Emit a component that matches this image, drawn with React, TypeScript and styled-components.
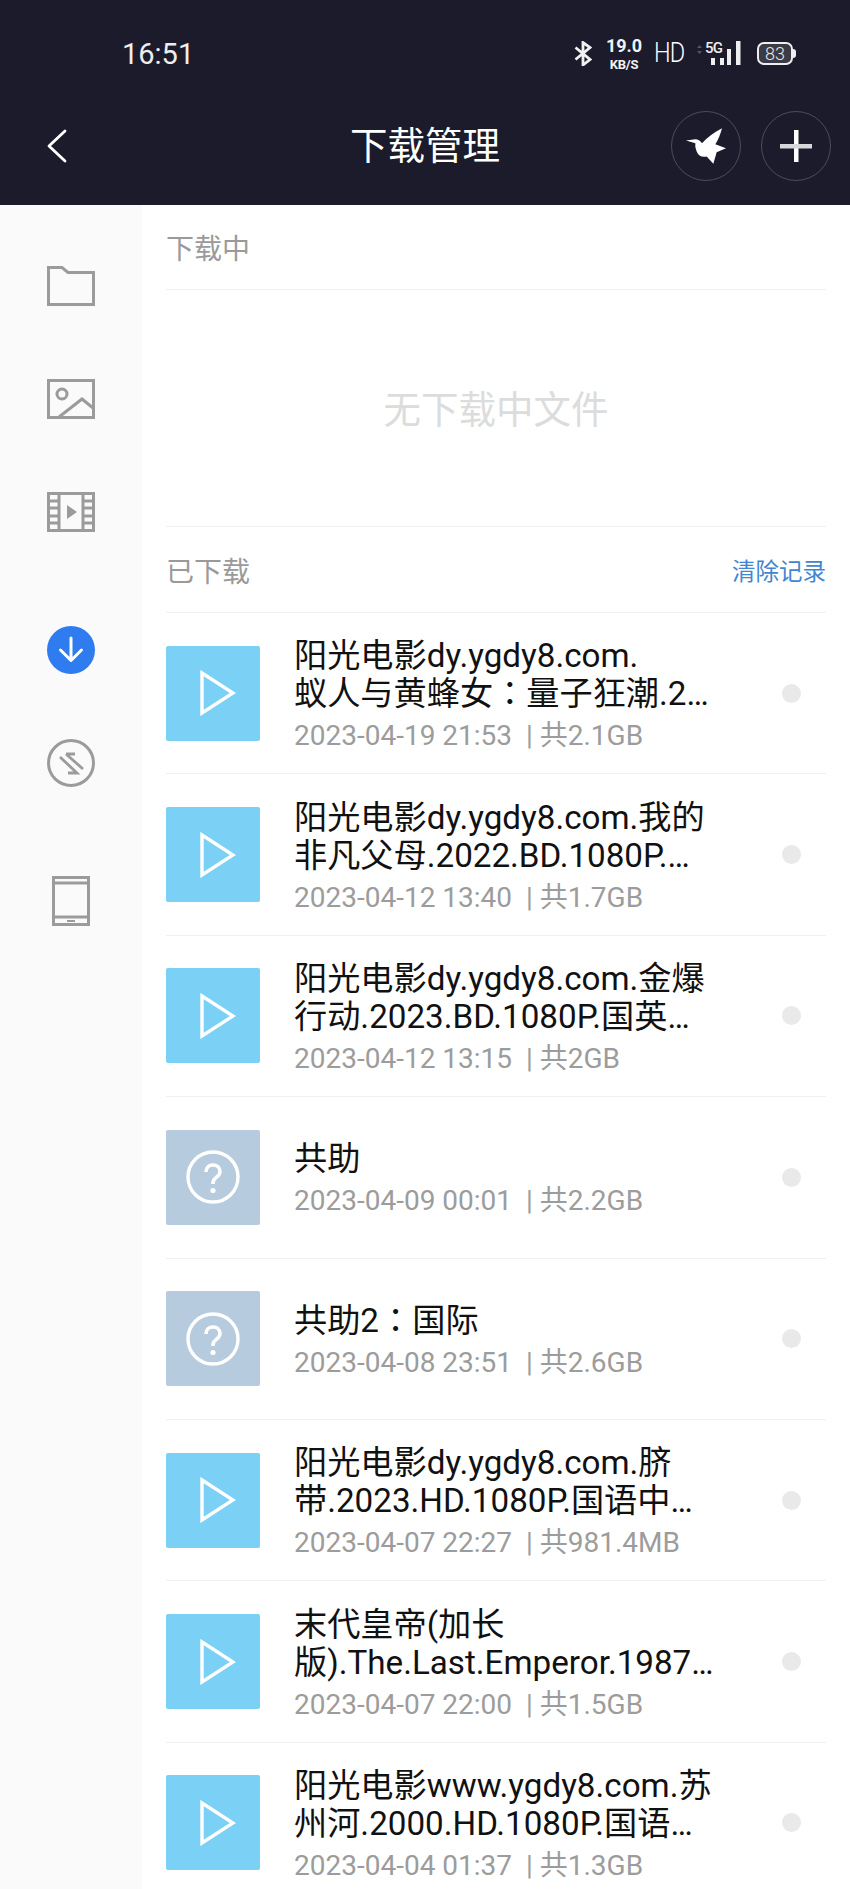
import React from "react";
import styled, { createGlobalStyle } from "styled-components";

const Global = createGlobalStyle`
  html, body { margin: 0; padding: 0; background: #fff; }
  body { font-family: Roboto, "Noto Sans CJK SC", sans-serif; }
`;

const Page = styled.div`
  width: 850px;
  height: 1889px;
  overflow: hidden;
  display: flex;
  flex-direction: column;
`;
const Header = styled.header`
  flex: none;
  height: 205px;
  background: #1b1b2b;
  color: #fff;
  display: flex;
  flex-direction: column;
`;
const StatusBar = styled.div`
  height: 106px;
  padding: 38px 55px 0 122px;
  box-sizing: border-box;
  display: flex;
  align-items: flex-start;
  justify-content: space-between;
`;
const Time = styled.span`
  font-size: 29px;
  line-height: 32px;
  color: #eee;
`;
const StatusIcons = styled.div`
  display: flex;
  align-items: center;
  height: 30px;
`;
const Speed = styled.div`
  margin-left: 13px;
  margin-top: 2px;
  width: 38px;
  display: flex;
  flex-direction: column;
  align-items: center;
  font-weight: 700;
  color: #f2f2f2;
`;
const SpeedValue = styled.span`
  font-size: 18px;
  line-height: 22px;
`;
const SpeedUnit = styled.span`
  font-size: 13px;
  line-height: 16px;
  letter-spacing: -0.2px;
`;
const Hd = styled.span`
  margin-left: 11px;
  font-size: 28px;
  line-height: 30px;
  letter-spacing: -1px;
  font-weight: 300;
  transform: scaleX(0.84);
  transform-origin: left center;
  width: 30px;
`;
const Battery = styled.div`
  margin-left: 15px;
  margin-right: 2px;
  position: relative;
  width: 36px;
  height: 23px;
  box-sizing: border-box;
  border: 2px solid #eee;
  border-radius: 7px;
  background: #3a3b47;
  background-clip: padding-box;
  display: flex;
  align-items: center;
  justify-content: center;
  font-size: 18px;
  font-weight: 300;
  color: #e8e8e8;
  &::after {
    content: "";
    position: absolute;
    right: -5px;
    top: 5px;
    width: 3px;
    height: 9px;
    background: #eee;
    border-radius: 0 3px 3px 0;
  }
`;
const Toolbar = styled.div`
  position: relative;
  height: 80px;
  padding: 0 19px 0 47px;
  display: flex;
  align-items: center;
`;
const Title = styled.h1`
  position: absolute;
  left: 0;
  right: 0;
  margin: 0;
  text-align: center;
  font-size: 37.5px;
  font-weight: 400;
  line-height: 80px;
  color: #fff;
`;
const ToolActions = styled.div`
  margin-left: auto;
  display: flex;
  gap: 20px;
`;
const RoundButton = styled.div`
  width: 70px;
  height: 70px;
  box-sizing: border-box;
  border: 1.5px solid #4c4d59;
  border-radius: 50%;
  display: flex;
  align-items: center;
  justify-content: center;
`;
const Body = styled.div`
  flex: 1;
  min-height: 0;
  display: flex;
`;
const Sidebar = styled.nav`
  flex: none;
  width: 142px;
  background: #fafafa;
  padding-top: 24px;
  display: flex;
  flex-direction: column;
`;
const SideItem = styled.div<{ $gap?: number }>`
  height: 113px;
  margin-top: ${(p) => p.$gap ?? 0}px;
  display: flex;
  align-items: center;
  justify-content: center;
`;
const Main = styled.main`
  flex: 1;
  min-width: 0;
  padding: 0 24px 0 24px;
  background: #fff;
`;
const SectionHead = styled.div<{ $h: number }>`
  height: ${(p) => p.$h}px;
  display: flex;
  align-items: center;
  justify-content: space-between;
  box-sizing: border-box;
  border-bottom: 1px solid #f0f0f0;
`;
const SectionLabel = styled.span`
  font-size: 28px;
  color: #9a9a9a;
`;
const ClearLink = styled.span`
  font-size: 23.5px;
  color: #3f87d0;
`;
const Empty = styled.div`
  height: 237px;
  box-sizing: border-box;
  padding-bottom: 4px;
  border-bottom: 1px solid #f0f0f0;
  display: flex;
  align-items: center;
  justify-content: center;
  font-size: 37.5px;
  color: #dcdcdc;
`;
const Row = styled.div`
  height: 161.4px;
  box-sizing: border-box;
  border-bottom: 1px solid #f0f0f0;
  display: flex;
  align-items: center;
`;
const Thumb = styled.div<{ $kind: "video" | "unknown" }>`
  flex: none;
  width: 94px;
  height: 95px;
  border-radius: 2px;
  background: ${(p) => (p.$kind === "video" ? "#7bd0f5" : "#b7cbdf")};
  display: flex;
  align-items: center;
  justify-content: center;
`;
const PlayWrap = styled.span`
  display: flex;
  margin-left: 10px;
`;
const Info = styled.div`
  flex: 1;
  min-width: 0;
  margin-left: 34px;
  padding-top: 5px;
`;
const NameLine = styled.div`
  font-size: 33.2px;
  line-height: 38px;
  color: #111;
  white-space: nowrap;
`;
const Colon = styled.span`
  font-family: Roboto, "Noto Sans CJK TC", sans-serif;
`;
const Meta = styled.div`
  margin-top: 5px;
  font-size: 28px;
  line-height: 36px;
  color: #9c9c9c;
  white-space: pre;
`;
const Dot = styled.span`
  flex: none;
  width: 19px;
  height: 19px;
  margin-right: 25px;
  border-radius: 50%;
  background: #e9e9e9;
`;

const ICON = "#9b9b9b";

const FolderIcon = () => (
  <svg width="48" height="40" viewBox="0 0 48 40" fill="none" stroke={ICON} strokeWidth="3">
    <path d="M1.5 1.5H15L21 6.5H46.5V38.5H1.5Z" />
  </svg>
);
const ImageIcon = () => (
  <svg width="48" height="40" viewBox="0 0 48 40" fill="none" stroke={ICON} strokeWidth="3">
    <rect x="1.5" y="1.5" width="45" height="37" />
    <circle cx="15" cy="15" r="5" />
    <path d="M12 38L35 20L46 29" />
  </svg>
);
const FilmIcon = () => (
  <svg width="48" height="40" viewBox="0 0 48 40" fill="none" stroke={ICON} strokeWidth="3">
    <rect x="1.5" y="1.5" width="45" height="37" />
    <path d="M12 2V38M36 2V38M2 9H11M2 16H11M2 24H11M2 31H11M37 9H46M37 16H46M37 24H46M37 31H46" />
    <path d="M20 13L30 20L20 27Z" fill={ICON} stroke="none" />
  </svg>
);
const DownloadIcon = () => (
  <svg width="48" height="48" viewBox="0 0 48 48" fill="none">
    <circle cx="24" cy="24" r="24" fill="#2f7bf0" />
    <path d="M24 12V34M13.5 24L24 34.5L34.5 24" stroke="#fff" strokeWidth="3" strokeLinecap="round" strokeLinejoin="round" />
  </svg>
);
const TransferIcon = () => (
  <svg width="48" height="48" viewBox="0 0 48 48" fill="none" stroke={ICON}>
    <circle cx="24" cy="24" r="22.5" strokeWidth="3" />
    <path d="M13 18L30 34H21M19 15H28M19 15L36 30" strokeWidth="2.8" />
  </svg>
);
const TabletIcon = () => (
  <svg width="38" height="50" viewBox="0 0 38 50" fill="none" stroke={ICON} strokeWidth="3">
    <rect x="1.5" y="1.5" width="35" height="47" />
    <path d="M2 7H36M2 41H36" />
    <path d="M15 45H23" strokeWidth="2" />
  </svg>
);
const PlayIcon = () => (
  <PlayWrap>
    <svg width="36" height="46" viewBox="0 0 36 46" fill="none" stroke="#fff" strokeWidth="3.4">
      <path d="M2 3L33 23L2 43Z" />
    </svg>
  </PlayWrap>
);
const QuestionIcon = () => (
  <svg width="56" height="56" viewBox="0 0 56 56" fill="none" stroke="#fff">
    <circle cx="28" cy="28" r="25" strokeWidth="3.4" />
    <path d="M21 23C21 18.5 24 16 28 16C32 16 35 18.5 35 22.5C35 28 29 28 28 33V35" strokeWidth="3.6" />
    <circle cx="28" cy="41.5" r="2.6" fill="#fff" stroke="none" />
  </svg>
);
const BirdIcon = () => (
  <svg width="40" height="36" viewBox="0 0 120 107" fill="#fff">
    <path d="M0 37L28 33Q40 33 48 45Q70 20 108 0Q100 30 88 48L120 60L92 72L82 107L62 85Q40 90 32 70Q26 55 28 45Z" />
  </svg>
);
const PlusIcon = () => (
  <svg width="34" height="34" viewBox="0 0 34 34">
    <rect x="15" y="1" width="4.5" height="32" fill="#fff" />
    <rect x="1" y="15" width="32" height="4.5" fill="#d8d8dc" />
  </svg>
);
const BluetoothIcon = () => (
  <svg width="18" height="25" viewBox="0 0 18 25" fill="none" stroke="#f0f0f0" strokeWidth="2.8" style={{ flex: "none" }}>
    <path d="M1.5 6.5L16 18.5L9 24V1.5L16 6.5L1.5 18.5" />
  </svg>
);
const SignalIcon = () => (
  <svg width="46" height="26" viewBox="0 0 46 26" style={{ flex: "none", marginLeft: 12 }}>
    <path d="M1 8L3.5 5L6 8ZM1 11L3.5 14L6 11Z" fill="#55565f" />
    <text x="9" y="13" fontSize="15" fontFamily="Roboto, sans-serif" fontWeight="500" fill="#eee" textLength="18">5G</text>
    <rect x="15" y="18" width="4" height="7" fill="#eee" />
    <rect x="24" y="18" width="4" height="7" fill="#eee" />
    <rect x="31" y="9" width="4" height="16" fill="#eee" />
    <rect x="40" y="1" width="4.5" height="24" fill="#eee" />
  </svg>
);

type Item = { lines: React.ReactNode[]; meta: string; kind: "video" | "unknown" };
const items: Item[] = [
  { lines: ["阳光电影dy.ygdy8.com.", <>蚁人与黄蜂女<Colon>：</Colon>量子狂潮.2…</>], meta: "2023-04-19 21:53  | 共2.1GB", kind: "video" },
  { lines: ["阳光电影dy.ygdy8.com.我的", "非凡父母.2022.BD.1080P.…"], meta: "2023-04-12 13:40  | 共1.7GB", kind: "video" },
  { lines: ["阳光电影dy.ygdy8.com.金爆", "行动.2023.BD.1080P.国英…"], meta: "2023-04-12 13:15  | 共2GB", kind: "video" },
  { lines: ["共助"], meta: "2023-04-09 00:01  | 共2.2GB", kind: "unknown" },
  { lines: [<>共助2<Colon>：</Colon>国际</>], meta: "2023-04-08 23:51  | 共2.6GB", kind: "unknown" },
  { lines: ["阳光电影dy.ygdy8.com.脐", "带.2023.HD.1080P.国语中…"], meta: "2023-04-07 22:27  | 共981.4MB", kind: "video" },
  { lines: ["末代皇帝(加长", "版).The.Last.Emperor.1987…"], meta: "2023-04-07 22:00  | 共1.5GB", kind: "video" },
  { lines: ["阳光电影www.ygdy8.com.苏", "州河.2000.HD.1080P.国语…"], meta: "2023-04-04 01:37  | 共1.3GB", kind: "video" },
];

export default function App() {
  return (
    <Page>
      <Global />
      <Header>
        <StatusBar>
          <Time>16:51</Time>
          <StatusIcons>
            <BluetoothIcon />
            <Speed>
              <SpeedValue>19.0</SpeedValue>
              <SpeedUnit>KB/S</SpeedUnit>
            </Speed>
            <Hd>HD</Hd>
            <SignalIcon />
            <Battery>83</Battery>
          </StatusIcons>
        </StatusBar>
        <Toolbar>
          <svg width="20" height="34" viewBox="0 0 20 34" fill="none" stroke="#fff" strokeWidth="2.8" strokeLinecap="round" strokeLinejoin="round">
            <path d="M18 2L2 17L18 32" />
          </svg>
          <Title>下载管理</Title>
          <ToolActions>
            <RoundButton><BirdIcon /></RoundButton>
            <RoundButton><PlusIcon /></RoundButton>
          </ToolActions>
        </Toolbar>
      </Header>
      <Body>
        <Sidebar>
          <SideItem><FolderIcon /></SideItem>
          <SideItem><ImageIcon /></SideItem>
          <SideItem><FilmIcon /></SideItem>
          <SideItem $gap={25}><DownloadIcon /></SideItem>
          <SideItem><TransferIcon /></SideItem>
          <SideItem $gap={25}><TabletIcon /></SideItem>
        </Sidebar>
        <Main>
          <SectionHead $h={85}>
            <SectionLabel>下载中</SectionLabel>
          </SectionHead>
          <Empty>无下载中文件</Empty>
          <SectionHead $h={86}>
            <SectionLabel>已下载</SectionLabel>
            <ClearLink>清除记录</ClearLink>
          </SectionHead>
          {items.map((it) => (
            <Row key={it.meta}>
              <Thumb $kind={it.kind}>{it.kind === "video" ? <PlayIcon /> : <QuestionIcon />}</Thumb>
              <Info>
                {it.lines.map((l, i) => (
                  <NameLine key={i}>{l}</NameLine>
                ))}
                <Meta>{it.meta}</Meta>
              </Info>
              <Dot />
            </Row>
          ))}
        </Main>
      </Body>
    </Page>
  );
}
